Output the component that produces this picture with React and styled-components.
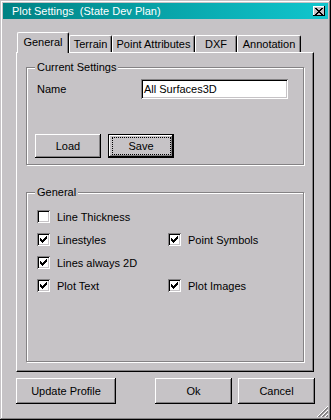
import React from 'react';
import styled, { createGlobalStyle, css } from 'styled-components';

const GlobalStyle = createGlobalStyle`
  html, body {
    margin: 0;
    padding: 0;
    background: #c6c3c6;
  }
  body {
    font-family: "Liberation Sans", Arial, sans-serif;
    font-size: 11px;
    color: #000;
  }
`;

const Window = styled.div`
  position: relative;
  width: 331px;
  height: 420px;
  box-sizing: border-box;
  padding: 3px;
  background: #c6c3c6;
  box-shadow: inset -1px -1px 0 #000, inset 1px 1px 0 #c6c3c6,
    inset -2px -2px 0 #848284, inset 2px 2px 0 #fff;
  display: flex;
  flex-direction: column;
`;

const TitleBar = styled.div`
  height: 16px;
  flex: none;
  display: flex;
  align-items: center;
  justify-content: space-between;
  padding: 0 3px 0 9px;
  background: linear-gradient(to right, #008284, #10c6ce);
`;

const Title = styled.span`
  color: #fff;
  font-size: 11px;
  white-space: pre;
`;

const CloseButton = styled.span`
  width: 12px;
  height: 10px;
  box-sizing: border-box;
  display: flex;
  align-items: center;
  justify-content: center;
  background: #c6c3c6;
  box-shadow: inset -1px -1px 0 #000, inset 1px 1px 0 #fff;
`;

const Body = styled.div`
  flex: 1;
  display: flex;
  flex-direction: column;
  padding: 13px 14px 0 13px;
`;

const TabRow = styled.div`
  height: 20px;
  display: flex;
  align-items: flex-end;
  padding-left: 1px;
`;

const Tab = styled.div`
  position: relative;
  z-index: ${p => (p.$active ? 2 : 1)};
  box-sizing: border-box;
  width: ${p => p.$w}px;
  height: ${p => (p.$active ? 21 : 17)}px;
  margin-bottom: ${p => (p.$active ? -1 : 0)}px;
  padding-top: ${p => (p.$active ? 3 : 2)}px;
  border-top: 1px solid #fff;
  border-left: 1px solid #fff;
  border-right: 1px solid #000;
  border-radius: 2px 2px 0 0;
  box-shadow: inset -1px 0 0 #848284;
  background: #c6c3c6;
  text-align: center;
  line-height: 13px;
  white-space: nowrap;
`;

const Panel = styled.div`
  height: 320px;
  box-sizing: border-box;
  display: flex;
  flex-direction: column;
  border-top: 1px solid #fff;
  border-left: 1px solid #fff;
  border-right: 1px solid #000;
  border-bottom: 1px solid #000;
  box-shadow: inset -1px -1px 0 #848284;
  padding: 14px 9px 9px 9px;
`;

const GroupBox = styled.div`
  box-sizing: border-box;
  border: 1px solid #848284;
  box-shadow: inset 1px 1px 0 #fff, 1px 1px 0 #fff;
  padding: 0 10px ${p => p.$pb || 0}px 10px;
  margin-top: ${p => p.$mt || 0}px;
  ${p =>
    p.$fill &&
    css`
      flex: 1;
    `}
`;

const Legend = styled.div`
  width: fit-content;
  margin: -7px 0 0 -2px;
  padding: 0 2px;
  height: 13px;
  line-height: 13px;
  background: #c6c3c6;
`;

const FieldRow = styled.div`
  display: flex;
  align-items: center;
  height: 20px;
  margin-top: 5px;
`;

const FieldLabel = styled.span`
  width: 104px;
`;

const TextInput = styled.div`
  width: 147px;
  height: 20px;
  box-sizing: border-box;
  padding: 0 3px;
  display: flex;
  align-items: center;
  background: #fff;
  box-shadow: inset 1px 1px 0 #848284, inset -1px -1px 0 #fff,
    inset 2px 2px 0 #000, inset -2px -2px 0 #c6c3c6;
`;

const ButtonRow = styled.div`
  display: flex;
  gap: 7px;
  margin: 35px 0 0 -2px;
`;

const Button = styled.button`
  position: relative;
  box-sizing: border-box;
  width: ${p => p.$w}px;
  height: ${p => p.$h}px;
  margin: 0;
  padding: 0;
  border: none;
  font: inherit;
  color: #000;
  background: #c6c3c6;
  box-shadow: inset -1px -1px 0 #000, inset 1px 1px 0 #fff,
    inset -2px -2px 0 #848284;
  ${p =>
    p.$default &&
    css`
      box-shadow: inset 0 0 0 1px #000, inset -2px -2px 0 #000,
        inset 2px 2px 0 #fff, inset -3px -3px 0 #848284;
      &::after {
        content: '';
        position: absolute;
        inset: 3px 3px 3px 4px;
        border: 1px dotted #000;
      }
    `}
`;

const CheckGrid = styled.div`
  display: grid;
  grid-template-columns: 131px 1fr;
  grid-auto-rows: 13px;
  row-gap: 10px;
  margin-top: 11px;
`;

const CheckItem = styled.label`
  display: flex;
  align-items: center;
  gap: 7px;
  grid-column: ${p => p.$col};
  white-space: nowrap;
`;

const CheckBox = styled.span`
  width: 13px;
  height: 13px;
  flex: none;
  box-sizing: border-box;
  display: flex;
  align-items: center;
  justify-content: center;
  background: #fff;
  box-shadow: inset 1px 1px 0 #848284, inset -1px -1px 0 #fff,
    inset 2px 2px 0 #000, inset -2px -2px 0 #c6c3c6;
`;

const Footer = styled.div`
  display: flex;
  justify-content: space-between;
  margin: 6px -1px 0 0;
`;

const FooterGroup = styled.div`
  display: flex;
  gap: 6px;
`;

const SizeGrip = styled.svg`
  position: absolute;
  right: 3px;
  bottom: 3px;
`;

const Check = ({ checked, col, children }) => (
  <CheckItem $col={col}>
    <CheckBox>
      {checked && (
        <svg width="7" height="7" viewBox="0 0 7 7" shapeRendering="crispEdges">
          <path d="M0 2h1v3h-1zM1 3h1v3h-1zM2 4h1v3h-1zM3 3h1v3h-1zM4 2h1v3h-1zM5 1h1v3h-1zM6 0h1v3h-1z" fill="#000" />
        </svg>
      )}
    </CheckBox>
    <span>{children}</span>
  </CheckItem>
);

const gripLines = [
  { k: 1, c: '#fff' }, { k: 2, c: '#848284' }, { k: 3, c: '#848284' },
  { k: 5, c: '#fff' }, { k: 6, c: '#848284' }, { k: 7, c: '#848284' },
  { k: 9, c: '#fff' }, { k: 10, c: '#848284' }, { k: 11, c: '#848284' },
];

export default function App() {
  return (
    <>
      <GlobalStyle />
      <Window>
        <TitleBar>
          <Title>Plot Settings  (State Dev Plan)</Title>
          <CloseButton>
            <svg width="8" height="7" viewBox="0 0 8 7" shapeRendering="crispEdges">
              <path d="M0 0h2v1h-2zM6 0h2v1h-2zM1 1h2v1h-2zM5 1h2v1h-2zM2 2h4v1h-4zM3 3h2v1h-2zM2 4h4v1h-4zM1 5h2v1h-2zM5 5h2v1h-2zM0 6h2v1h-2zM6 6h2v1h-2z" fill="#000" />
            </svg>
          </CloseButton>
        </TitleBar>

        <Body>
          <TabRow>
            <Tab $w={52} $active>General</Tab>
            <Tab $w={43}>Terrain</Tab>
            <Tab $w={83}>Point Attributes</Tab>
            <Tab $w={42}>DXF</Tab>
            <Tab $w={64}>Annotation</Tab>
          </TabRow>

          <Panel>
            <GroupBox $pb={6}>
              <Legend>Current Settings</Legend>
              <FieldRow>
                <FieldLabel>Name</FieldLabel>
                <TextInput>All Surfaces3D</TextInput>
              </FieldRow>
              <ButtonRow>
                <Button $w={66} $h={24}>Load</Button>
                <Button $w={66} $h={24} $default>Save</Button>
              </ButtonRow>
            </GroupBox>

            <GroupBox $mt={27} $fill>
              <Legend>General</Legend>
              <CheckGrid>
                <Check col={1}>Line Thickness</Check>
                <Check col={1} checked>Linestyles</Check>
                <Check col={2} checked>Point Symbols</Check>
                <Check col={1} checked>Lines always 2D</Check>
                <Check col={1} checked>Plot Text</Check>
                <Check col={2} checked>Plot Images</Check>
              </CheckGrid>
            </GroupBox>
          </Panel>

          <Footer>
            <Button $w={100} $h={26}>Update Profile</Button>
            <FooterGroup>
              <Button $w={77} $h={26}>Ok</Button>
              <Button $w={77} $h={26}>Cancel</Button>
            </FooterGroup>
          </Footer>
        </Body>

        <SizeGrip width="12" height="12" viewBox="0 0 12 12" shapeRendering="crispEdges">
          {gripLines.map(({ k, c }) => (
            <line key={k} x1={k} y1={12} x2={12} y2={k} stroke={c} strokeWidth="1" />
          ))}
        </SizeGrip>
      </Window>
    </>
  );
}
